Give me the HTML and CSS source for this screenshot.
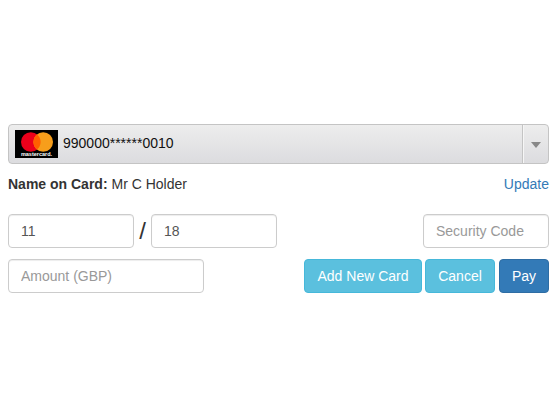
FILE: index.html
```html
<!DOCTYPE html>
<html lang="en">
<head>
    <meta charset="UTF-8">
    <title>Card Payment</title>
    <link rel="stylesheet" href="styles.css">
</head>
<body>
    <div class="payment">
        <div class="card-select">
            <div class="card-value">
                <div class="card-logo">
                    <svg class="card-circles" width="32" height="20" viewBox="0 0 32 20">
                        <circle cx="9.8" cy="10" r="9.8" fill="#eb001b"/>
                        <circle cx="22.2" cy="10" r="9.8" fill="#f79e1b"/>
                        <path d="M16 2.4a9.8 9.8 0 0 1 0 15.2a9.8 9.8 0 0 1 0-15.2z" fill="#ff5f00"/>
                    </svg>
                    <span class="card-brand">mastercard.</span>
                </div>
                <span class="card-number">990000******0010</span>
            </div>
            <div class="card-arrow"><span class="caret"></span></div>
        </div>

        <div class="name-row">
            <div><strong>Name on Card:</strong> Mr C Holder</div>
            <a href="#" class="update">Update</a>
        </div>

        <div class="expiry-row">
            <input class="field field-short" type="text" value="11">
            <span class="slash">/</span>
            <input class="field field-short" type="text" value="18">
            <input class="field field-short security" type="text" placeholder="Security Code">
        </div>

        <div class="action-row">
            <input class="field field-amount" type="text" placeholder="Amount (GBP)">
            <div class="buttons">
                <button class="btn btn-info btn-add">Add New Card</button>
                <button class="btn btn-info btn-cancel">Cancel</button>
                <button class="btn btn-primary btn-pay">Pay</button>
            </div>
        </div>
    </div>
</body>
</html>
```

FILE: styles.css
```css
* {
    box-sizing: border-box;
}

body {
    margin: 0;
    font-family: "Liberation Sans", Arial, sans-serif;
    font-size: 14px;
    line-height: 20px;
    color: #333;
    background-color: #fff;
}

.payment {
    width: 541px;
    margin-left: 8px;
    padding-top: 124px;
}

/* Card dropdown */
.card-select {
    display: flex;
    height: 40px;
    border: 1px solid #c4c4c4;
    border-radius: 4px;
    background: linear-gradient(#ededed, #dcdcdf);
}

.card-value {
    flex: 1;
    display: flex;
    align-items: center;
    padding-left: 6px;
}

.card-logo {
    display: flex;
    flex-direction: column;
    align-items: center;
    width: 43px;
    height: 28px;
    padding-top: 2px;
    background-color: #000;
}

.card-circles {
    display: block;
    flex: none;
}

.card-brand {
    color: #fff;
    font-size: 5.5px;
    font-weight: bold;
    line-height: 5px;
}

.card-number {
    margin-left: 5px;
    margin-bottom: 2px;
    color: #111;
    font-size: 14px;
}

.card-arrow {
    display: flex;
    justify-content: center;
    align-items: center;
    width: 26px;
    border-left: 1px solid #c4c4c4;
    box-shadow: inset 1px 0 0 #f6f6f6;
}

.caret {
    width: 0;
    height: 0;
    margin-top: 2px;
    border-left: 5.5px solid transparent;
    border-right: 5.5px solid transparent;
    border-top: 6px solid #888;
}

/* Name row */
.name-row {
    display: flex;
    justify-content: space-between;
    margin-top: 10px;
}

.update {
    color: #337ab7;
    text-decoration: none;
}

/* Fields */
.field {
    height: 34px;
    padding: 6px 12px;
    font-family: inherit;
    font-size: 14px;
    color: #555;
    background-color: #fff;
    border: 1px solid #ccc;
    border-radius: 4px;
    box-shadow: inset 0 1px 1px rgba(0, 0, 0, .075);
}

.field::placeholder {
    color: #999;
}

.field-short {
    width: 126px;
}

.field-amount {
    width: 196px;
}

.expiry-row {
    display: flex;
    align-items: center;
    margin-top: 20px;
}

.slash {
    width: 17px;
    font-size: 24px;
    line-height: 34px;
    text-align: center;
}

.security {
    margin-left: auto;
}

.action-row {
    display: flex;
    justify-content: space-between;
    margin-top: 11px;
}

/* Buttons */
.buttons {
    display: flex;
}

.btn {
    height: 34px;
    padding: 6px 12px;
    font-family: inherit;
    font-size: 14px;
    color: #fff;
    border: 1px solid transparent;
    border-radius: 4px;
}

.btn-info {
    background-color: #5bc0de;
    border-color: #46b8da;
}

.btn-primary {
    background-color: #337ab7;
    border-color: #2e6da4;
}

.btn-add {
    width: 118px;
}

.btn-cancel {
    width: 70px;
    margin-left: 3px;
}

.btn-pay {
    width: 50px;
    margin-left: 4px;
}
```
